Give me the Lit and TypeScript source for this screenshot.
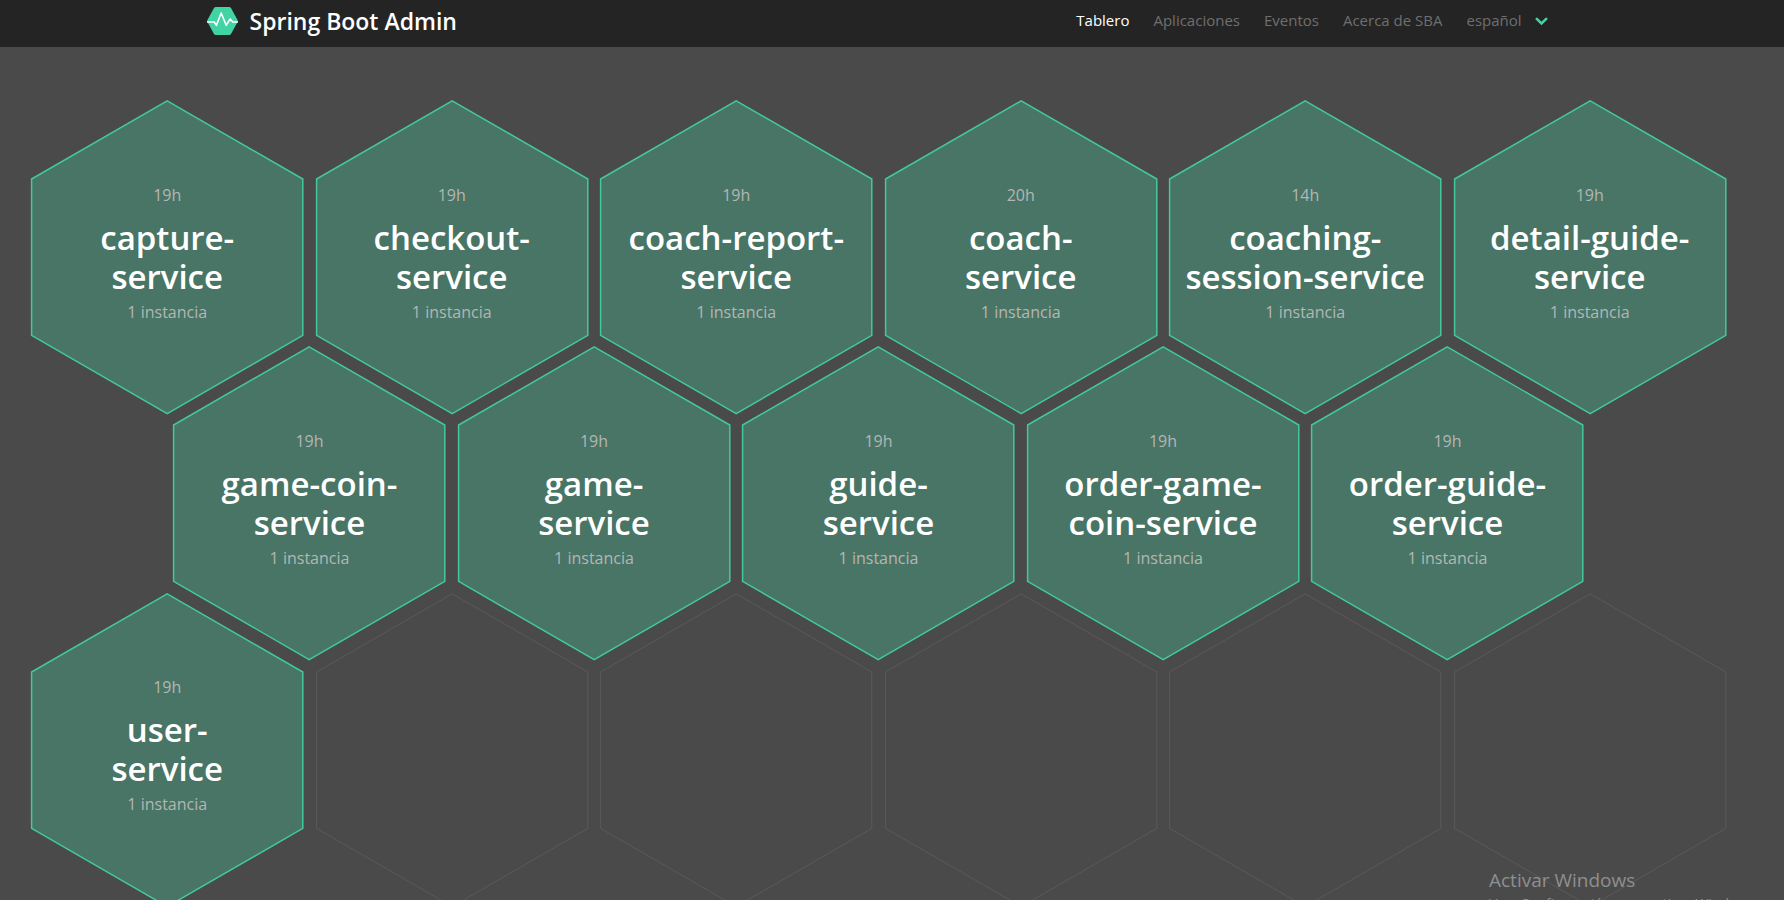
import { LitElement, html, css } from "lit";
import { customElement, property } from "lit/decorators.js";

/** The name is kept as the two lines it is shown on. */
interface Service {
  name: [string, string];
  uptime: string;
}

const COLUMNS = 6;

const SERVICES: Service[] = [
  { name: ["capture-", "service"], uptime: "19h" },
  { name: ["checkout-", "service"], uptime: "19h" },
  { name: ["coach-report-", "service"], uptime: "19h" },
  { name: ["coach-", "service"], uptime: "20h" },
  { name: ["coaching-", "session-service"], uptime: "14h" },
  { name: ["detail-guide-", "service"], uptime: "19h" },
  { name: ["game-coin-", "service"], uptime: "19h" },
  { name: ["game-", "service"], uptime: "19h" },
  { name: ["guide-", "service"], uptime: "19h" },
  { name: ["order-game-", "coin-service"], uptime: "19h" },
  { name: ["order-guide-", "service"], uptime: "19h" },
  { name: ["user-", "service"], uptime: "19h" },
];

/** Splits the services into honeycomb rows: 6, 5, 6, ... padded with empty cells. */
function toRows(services: Service[]): (Service | null)[][] {
  const rows: (Service | null)[][] = [];
  let index = 0;
  while (index < services.length) {
    const size = rows.length % 2 === 0 ? COLUMNS : COLUMNS - 1;
    const start = index;
    rows.push(Array.from({ length: size }, (_, i) => services[start + i] ?? null));
    index += size;
  }
  return rows;
}

@customElement("hex-cell")
export class HexCell extends LitElement {
  @property({ attribute: false }) service: Service | null = null;

  static styles = css`
    :host {
      display: grid;
      grid-template: minmax(0, 1fr) / minmax(0, 1fr);
      aspect-ratio: 2845 / 2464;
      pointer-events: none;
    }
    .shape {
      grid-area: 1 / 1;
      display: block;
      width: 100%;
      height: 100%;
      overflow: visible;
    }
    .outline {
      fill: none;
      stroke: #5a5a5a;
      stroke-width: 1px;
      vector-effect: non-scaling-stroke;
    }
    .up {
      fill: #487565;
      stroke: #42c99e;
      stroke-width: 1.5px;
    }
    .body {
      grid-area: 1 / 1;
      display: flex;
      flex-direction: column;
      align-items: center;
      justify-content: center;
      padding: 0 16px 8px;
      color: #b5b5b5;
      font-size: 16px;
      line-height: 24px;
      text-align: center;
      text-decoration: none;
      pointer-events: auto;
    }
    .name {
      margin: 11px 0 4px;
      color: #fff;
      font-size: 33px;
      font-weight: 600;
      line-height: 39px;
    }
  `;

  render() {
    const s = this.service;
    return html`
      <svg class="shape" viewBox="0 0 2845 2464" aria-hidden="true">
        <polygon
          class="outline ${s ? "up" : ""}"
          points="1422,-332 2778,450 2778,2014 1422,2796 66,2014 66,450"
        />
      </svg>
      ${s
        ? html`<a class="body" href="#${s.name.join("")}">
            <span>${s.uptime}</span>
            <h2 class="name">${s.name[0]}<br />${s.name[1]}</h2>
            <span>1 instancia</span>
          </a>`
        : null}
    `;
  }
}

@customElement("app-root")
export class AppRoot extends LitElement {
  static styles = css`
    :host {
      display: flex;
      flex-direction: column;
      position: relative;
      height: 100vh;
      overflow: hidden;
      background: #4a4a4a;
      font-family: "Open Sans", "Noto Sans", sans-serif;
    }
    .bar {
      flex: none;
      padding-right: 17px;
      background: #242424;
    }
    .container {
      display: flex;
      align-items: center;
      justify-content: space-between;
      max-width: 1354px;
      height: 47px;
      margin: 0 auto;
    }
    .brand {
      display: flex;
      align-items: center;
      gap: 12px;
      margin-bottom: 6px;
      color: #fff;
      font-size: 23px;
      font-weight: 600;
      line-height: 32px;
      text-decoration: none;
    }
    .logo {
      width: 31px;
      height: 28px;
    }
    .nav {
      display: flex;
      align-items: center;
      gap: 24px;
      margin-bottom: 8px;
      padding-right: 13px;
      font-size: 15px;
      line-height: 24px;
    }
    .link {
      color: #6f6f6f;
      text-decoration: none;
    }
    .active {
      color: #fff;
    }
    .language {
      display: flex;
      align-items: center;
      gap: 12px;
    }
    .select {
      appearance: none;
      padding: 0;
      border: 0;
      background: transparent;
      color: #6f6f6f;
      font: inherit;
    }
    .chevron {
      width: 13px;
      height: 9px;
      margin-top: 4px;
    }
    .board {
      display: flex;
      flex-direction: column;
      flex: none;
      padding: 87px 52px 0 25px;
    }
    .row {
      display: grid;
      grid-template-columns: repeat(12, minmax(0, 1fr));
    }
    .cell {
      grid-column: span 2;
    }
    .row:nth-child(even) .cell:first-child {
      grid-column: 2 / span 2;
    }
    .watermark {
      position: absolute;
      top: 866px;
      left: 1489px;
      color: #8f8f8f;
      white-space: nowrap;
      pointer-events: none;
    }
    .title {
      margin: 0;
      font-size: 19px;
      line-height: 28px;
    }
    .hint {
      margin: 0;
      font-size: 14px;
      line-height: 20px;
    }
  `;

  render() {
    return html`
      <header class="bar">
        <div class="container">
          <a class="brand" href="#inicio">
            <svg class="logo" viewBox="0 0 31 28" aria-hidden="true">
              <path
                d="M8.8 0h13.4q1.2 0 1.8 1l6.4 11.8q.7 1.2 0 2.4L24 27q-.6 1-1.8 1H8.8q-1.2 0-1.8-1L.6 15.2q-.7-1.2 0-2.4L7 1q.6-1 1.8-1z"
                fill="#42d3a5"
              />
              <path
                d="M0 15h7.2l2.2 3.4L14.2 6l5 12.2 3.9-6.2 2.7 3H31"
                fill="none"
                stroke="#fff"
                stroke-width="1.6"
                stroke-linejoin="round"
              />
            </svg>
            <span>Spring Boot Admin</span>
          </a>
          <nav class="nav">
            <a class="link active" href="#tablero">Tablero</a>
            <a class="link" href="#aplicaciones">Aplicaciones</a>
            <a class="link" href="#eventos">Eventos</a>
            <a class="link" href="#acerca">Acerca de SBA</a>
            <label class="language">
              <select class="select" aria-label="Idioma">
                <option selected>español</option>
              </select>
              <svg class="chevron" viewBox="0 0 13 9" aria-hidden="true">
                <path
                  d="M1.8 1.8l4.7 4.7 4.7-4.7"
                  fill="none"
                  stroke="#42d3a5"
                  stroke-width="2.6"
                  stroke-linecap="round"
                />
              </svg>
            </label>
          </nav>
        </div>
      </header>
      <main class="board">
        ${toRows(SERVICES).map(
          (row) => html`<div class="row">
            ${row.map((s) => html`<hex-cell class="cell" .service=${s}></hex-cell>`)}
          </div>`
        )}
      </main>
      <aside class="watermark">
        <p class="title">Activar Windows</p>
        <p class="hint">Ve a Configuración para activar Windows.</p>
      </aside>
    `;
  }
}
